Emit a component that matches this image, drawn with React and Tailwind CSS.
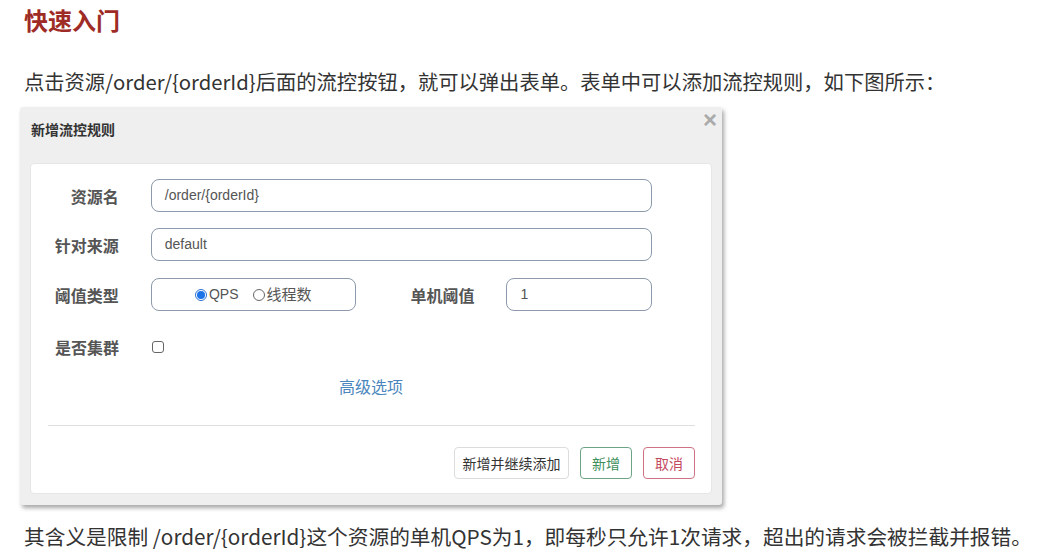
export default function App() {
  const cjk = { fontFamily: '"Noto Sans CJK SC", "Noto Sans", sans-serif' };
  const latin = { fontFamily: '"Liberation Sans", "Noto Sans CJK SC", sans-serif' };

  return (
    <div className="w-[1043px] h-[555px] bg-white overflow-hidden" style={cjk}>
      <div className="pl-[24px] pt-[3px]">
        <h1 className="text-[24px] leading-[34px] font-bold text-[#9e2b25]">快速入门</h1>
        <p className="mt-[30px] text-[20.3px] leading-[28px] text-[#333]">
          点击资源/order/{'{orderId}'}后面的流控按钮，就可以弹出表单。表单中可以添加流控规则，如下图所示：
        </p>
      </div>

      {/* modal */}
      <div className="ml-[20px] mt-[12px] w-[702px] h-[398px] bg-[#efefef] rounded-[3px] shadow-[2px_3px_4px_rgba(0,0,0,0.35)] relative px-[10px] flex flex-col">
        <div className="h-[56px] flex items-center pl-[1px] pb-[12px] text-[14px] font-bold text-[#333]">
          新增流控规则
        </div>
        <button className="absolute right-[5px] top-[1px] text-[#aaaaaa] text-[24px] leading-[24px] font-bold" style={latin}>×</button>

        <div className="bg-white rounded-[4px] border border-[#e6e6e6] h-[331px] pt-[15px] pl-[23px] pr-[59px] flex flex-col">
          <div className="flex items-center h-[33px]">
            <label className="w-[65px] text-right text-[16px] font-bold text-[#555]">资源名</label>
            <div className="ml-[32px] w-[503px] h-[33px] rounded-[8px] border border-[#8c9aab] flex items-center px-[13px] text-[14px] text-[#555]" style={latin}>
              /order/{'{orderId}'}
            </div>
          </div>

          <div className="flex items-center h-[33px] mt-[16px]">
            <label className="w-[65px] text-right text-[16px] font-bold text-[#555]">针对来源</label>
            <div className="ml-[32px] w-[503px] h-[33px] rounded-[8px] border border-[#8c9aab] flex items-center px-[13px] text-[14px] text-[#555]" style={latin}>
              default
            </div>
          </div>

          <div className="flex items-center h-[33px] mt-[17px]">
            <label className="w-[65px] text-right text-[16px] font-bold text-[#555]">阈值类型</label>
            <div className="ml-[32px] w-[206px] h-[33px] rounded-[8px] border border-[#8c9aab] flex items-center justify-center gap-[4px] text-[15px] text-[#555]">
              <span className="flex items-center gap-[2px]">
                <span className="w-[12px] h-[12px] rounded-full border border-[#2b72d6] bg-white flex items-center justify-center">
                  <span className="w-[8px] h-[8px] rounded-full bg-[#1a73e8]"></span>
                </span>
                <span className="text-[14px]" style={latin}>QPS</span>
              </span>
              <span className="flex items-center gap-[2px] ml-[10px]">
                <span className="w-[12px] h-[12px] rounded-full border border-[#666] bg-white"></span>
                <span>线程数</span>
              </span>
            </div>
            <label className="ml-[54px] w-[65px] text-right text-[16px] font-bold text-[#555]">单机阈值</label>
            <div className="ml-[31px] w-[147px] h-[33px] rounded-[8px] border border-[#8c9aab] flex items-center px-[14px] text-[14px] text-[#555]" style={latin}>
              1
            </div>
          </div>

          <div className="flex items-center h-[24px] mt-[24px]">
            <label className="w-[65px] text-right text-[16px] font-bold text-[#555]">是否集群</label>
            <span className="ml-[33px] w-[12px] h-[12px] rounded-[3px] border border-[#666] bg-white"></span>
          </div>

          <div className="mt-[16px] text-center pl-[36px] text-[16px] text-[#4a86bd] leading-[22px]">高级选项</div>

          <div className="mt-[28px] -ml-[6px] -mr-[43px] border-t border-[#dedede]"></div>

          <div className="mt-[21px] -mr-[43px] flex justify-end gap-[11px]">
            <button className="w-[115px] h-[32px] rounded-[4px] border border-[#dcdcdc] bg-white text-[14px] text-[#333]">新增并继续添加</button>
            <button className="w-[52px] h-[32px] rounded-[4px] border border-[#6ea486] bg-white text-[14px] text-[#3c8f5d]">新增</button>
            <button className="w-[52px] h-[32px] rounded-[4px] border border-[#cf7283] bg-white text-[14px] text-[#c4485e]">取消</button>
          </div>
        </div>
      </div>

      <p className="pl-[24px] mt-[17px] text-[20.7px] leading-[28px] text-[#333] whitespace-nowrap">
        其含义是限制 /order/{'{orderId}'}这个资源的单机QPS为1，即每秒只允许1次请求，超出的请求会被拦截并报错。
      </p>
    </div>
  );
}
